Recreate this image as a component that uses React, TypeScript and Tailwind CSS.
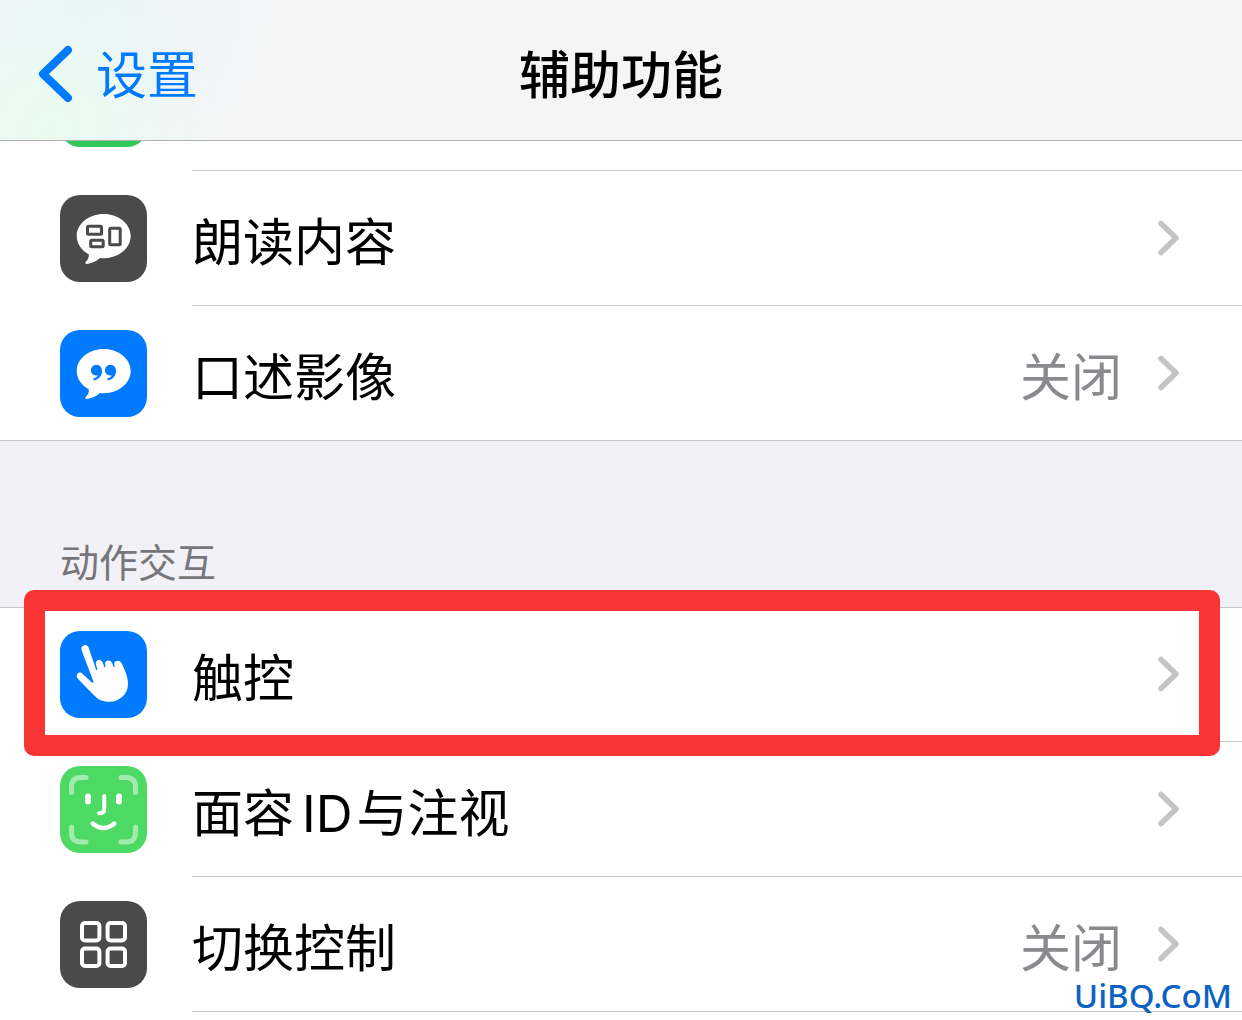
import type { ReactNode } from "react";

function Bubble() {
  return (
    <path
      d="M43.7 19C58.6 19 70.7 28.8 70.7 41S58.6 63.2 43.7 63.2C42.4 63.2 41.2 63.1 40 63C36.500 66.200 31.500 68.700 26.800 68.900C25.200 68.900 24.900 67.700 25.900 66.700C27.800 64.800 29 62.600 28.900 59.400C21.500 55.400 16.700 48.700 16.700 41C16.700 28.800 28.800 19 43.700 19Z"
      fill="white"
    />
  );
}

function SpokenIcon() {
  return (
    <>
      <Bubble />
      <g fill="none" stroke="#4a4a4a" strokeWidth="3">
        <rect x="27.500" y="31.300" width="14" height="8" rx="1" />
        <rect x="30.700" y="45.300" width="12.500" height="6.400" rx="1" />
        <rect x="49.700" y="33.300" width="10.500" height="16.500" rx="1" />
      </g>
    </>
  );
}

function QuoteIcon() {
  const mark =
    "M36.3 34.800C39.900 34.800 42 37.600 42 41.100C42 45.800 38.800 49.400 34.800 50.300C33.200 50.600 32.600 48.900 34 48.300C36 47.500 37.300 46.600 37.800 45.200C33.900 46.400 31 43.800 31 40.300C31 37.200 33.300 34.800 36.300 34.800Z";
  return (
    <>
      <Bubble />
      <g fill="#007aff">
        <path d={mark} />
        <path d={mark} transform="translate(14 0)" />
      </g>
    </>
  );
}

function HandIcon() {
  return (
    <path
      d="M21.600 19.300C20.700 16.600 22 14.700 24.200 14.200C26.200 13.800 27.900 14.800 28.800 17L36 38.500C36.300 39.500 37.600 39.200 37.300 38.100L35.900 33.600C35.300 31.300 36.600 29.500 38.500 29.100C40.600 28.700 42 29.700 42.700 31.600L44.200 35.700C44.600 36.600 45.700 36.200 45.500 35.300L45 33.300C44.700 31.300 46.100 29.900 47.700 29.600C49.700 29.300 51.300 30.200 52.100 32L53.400 35.500C53.800 36.500 54.800 36 54.600 35.100L54.100 33.200C53.800 31.300 55 30.200 56.700 29.900C59.700 29.500 61.600 31.500 62.700 34.400C65 40 68.200 45.500 68 53.500C67.800 63 59.500 70.800 49.500 70.800C42.500 70.800 37.500 68.500 33 63.300L18.100 48.100C16.500 46.300 16.200 44.200 17.500 42.700C18.900 41.100 21.100 41.300 22.700 42.900L31.900 51.500C32.800 52.300 33.800 51.700 33.400 50.600Z"
      fill="white"
    />
  );
}

function FaceIcon() {
  return (
    <g fill="none" stroke="white" strokeLinecap="round">
      <g strokeWidth="5" strokeOpacity="0.48">
        <path d="M11.500 26.500V21Q11.500 11.500 21 11.500H26" />
        <path d="M61 11.500H66Q75.500 11.500 75.500 21V26.500" />
        <path d="M11.500 61V66.500Q11.500 76 21 76H26" />
        <path d="M61 76H66Q75.500 76 75.500 66.500V61" />
      </g>
      <path d="M28 30.500V35.500M59 30.500V35.500" strokeWidth="6" />
      <path d="M44.300 30V43Q44.300 47.300 39 47.300" strokeWidth="4" />
      <path d="M32.700 57.500Q43.500 66.500 54.300 57.500" strokeWidth="4.400" />
    </g>
  );
}

function GridIcon() {
  return (
    <g fill="none" stroke="white" strokeWidth="4">
      <rect x="22" y="22" width="17.400" height="17.400" rx="3" />
      <rect x="47.600" y="22" width="17.400" height="17.400" rx="3" />
      <rect x="22" y="47.600" width="17.400" height="17.400" rx="3" />
      <rect x="47.600" y="47.600" width="17.400" height="17.400" rx="3" />
    </g>
  );
}

function Tile({ color, children }: { color: string; children?: ReactNode }) {
  return (
    <span className={`size-[87px] shrink-0 rounded-[20px] ${color}`}>
      <svg viewBox="0 0 87 87" className="size-full" aria-hidden="true">
        {children}
      </svg>
    </span>
  );
}

type RowProps = {
  color: string;
  icon: ReactNode;
  label: ReactNode;
  value?: string;
  last?: boolean;
  marked?: boolean;
};

function Row({ color, icon, label, value, last, marked }: RowProps) {
  return (
    <li className="relative">
      <a href="#" className={`flex h-[135px] pl-[60px] ${last ? "border-b border-[#c6c6c8]" : ""}`}>
        <span className="flex w-[132px] shrink-0 pt-6">
          <Tile color={color}>{icon}</Tile>
        </span>
        <span
          className={`flex flex-1 items-center pr-[60px] ${last ? "" : "border-b border-[#c6c6c8]"}`}
        >
          <span className="flex-1 pt-2.5">{label}</span>
          {value && <span className="pt-2.5 pr-[34px] text-[#8a8a8e]">{value}</span>}
          <svg viewBox="0 0 26 40" className="h-10 w-[26px] shrink-0" fill="none" aria-hidden="true">
            <path
              d="M5 5.500L20 20L5 34.500"
              stroke="#c4c4c6"
              strokeWidth="5.500"
              strokeLinecap="round"
              strokeLinejoin="round"
            />
          </svg>
        </span>
      </a>
      {marked && (
        <div className="pointer-events-none absolute -top-[17px] right-[22px] -bottom-[14px] left-6 z-10 rounded-[10px] border-[21px] border-[#f83434]" />
      )}
    </li>
  );
}

export default function App() {
  return (
    <div className="relative h-screen overflow-hidden bg-white font-['Inter','Noto_Sans_CJK_SC',sans-serif] text-[51px] leading-[72px] text-black">
      <header className="grid h-[141px] grid-cols-[1fr_auto_1fr] items-center border-b border-[#b0b0b2] bg-[#f5f5f5] bg-[radial-gradient(circle_at_50px_130px,#e9fbf0,transparent_180px),radial-gradient(circle_at_85px_0px,#e9f4fd,transparent_200px)] pt-2">
        <a href="#" className="flex items-center pl-9 text-[#007aff]">
          <svg viewBox="0 0 40 60" className="h-[60px] w-10" fill="none" aria-hidden="true">
            <path
              d="M32 6L7 30L32 54"
              stroke="currentColor"
              strokeWidth="8"
              strokeLinecap="round"
              strokeLinejoin="round"
            />
          </svg>
          <span className="pt-1 pl-5">设置</span>
        </a>
        <h1 className="pt-1 font-medium">辅助功能</h1>
      </header>

      <ul>
        <li className="flex h-[30px] items-end overflow-hidden pl-[60px]">
          <span className="flex h-[135px] w-[132px] shrink-0 pt-6">
            <Tile color="bg-[#34c759]" />
          </span>
          <span className="h-full flex-1 border-b border-[#c6c6c8]" />
        </li>
        <Row color="bg-[#4a4a4a]" icon={<SpokenIcon />} label="朗读内容" />
        <Row color="bg-[#007aff]" icon={<QuoteIcon />} label="口述影像" value="关闭" last />
      </ul>

      <h2 className="flex h-[167px] items-end border-b border-[#c6c6c8] bg-[#f2f1f7] pb-4 pl-[60px] text-[39px] leading-[56px] text-[#76767b]">
        动作交互
      </h2>

      <ul className="-mt-px">
        <Row color="bg-[#007aff]" icon={<HandIcon />} label="触控" marked />
        <Row
          color="bg-[#4cd964]"
          icon={<FaceIcon />}
          label={
            <>
              面容<span className="pr-1 pl-2">ID</span>与注视
            </>
          }
        />
        <Row color="bg-[#4a4a4a]" icon={<GridIcon />} label="切换控制" value="关闭" />
      </ul>

      <p className="absolute right-2.5 bottom-1 font-['Noto_Sans',sans-serif] text-[33px] leading-10 font-medium text-[#0c62c2]">
        UiBQ.CoM
      </p>
    </div>
  );
}
